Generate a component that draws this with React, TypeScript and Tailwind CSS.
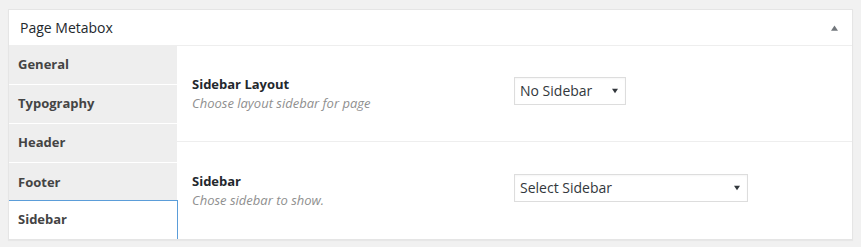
import React, { useState } from 'react';

const tabs = ['General', 'Typography', 'Header', 'Footer', 'Sidebar'];

const Caret: React.FC<{ up?: boolean; className?: string }> = ({ up, className }) => (
  <svg width="8" height="6" viewBox="0 0 8 6" className={className}>
    {up ? <path d="M4 0 L8 6 L0 6 Z" fill="currentColor" /> : <path d="M0 0 L8 0 L4 6 Z" fill="currentColor" />}
  </svg>
);

const FakeSelect: React.FC<{ value: string; width: string }> = ({ value, width }) => (
  <div
    className={`${width} h-[28px] border border-[#dddddd] bg-white flex items-center justify-between pl-[5px] pr-[7px] text-[14px] text-[#32373c] shadow-[inset_0_1px_2px_rgba(0,0,0,0.04)]`}
  >
    <span>{value}</span>
    <Caret className="text-[#32373c] w-[6px] h-[6px]" />
  </div>
);

const App: React.FC = () => {
  const [active, setActive] = useState('Sidebar');

  return (
    <div className="h-[247px] bg-[#f1f1f1] pt-[9px] px-[8px] font-['Open_Sans',sans-serif] text-[#23282d]">
      <div className="w-[845px] bg-white border border-[#e5e5e5] shadow-[0_1px_1px_rgba(0,0,0,0.04)]">
        {/* Header */}
        <div className="h-[36px] border-b border-[#eeeeee] flex items-center justify-between pl-[11px] pr-[14px]">
          <h2 className="text-[14px] leading-none">Page Metabox</h2>
          <Caret up className="text-[#72777c] w-[7px] h-[6px]" />
        </div>

        {/* Body */}
        <div className="flex h-[193px]">
          <ul className="w-[168px] bg-[#eeeeee] flex flex-col">
            {tabs.map((t, i) => {
              const isActive = t === active;
              const nextActive = tabs[i + 1] === active;
              return (
                <li
                  key={t}
                  onClick={() => setActive(t)}
                  className={
                    isActive
                      ? '-mt-[2px] flex-1 w-[169px] bg-white border-t border-r border-[#5b9dd9] flex items-center pl-[9px] text-[13px] font-bold text-[#444444] cursor-pointer relative z-10'
                      : `h-[39px] ${nextActive ? '' : 'border-b border-white'} flex items-center pl-[9px] text-[13px] font-bold text-[#444444] cursor-pointer`
                  }
                >
                  {t}
                </li>
              );
            })}
          </ul>

          <div className="flex-1 flex flex-col">
            <div className="h-[96px] border-b border-[#eeeeee] flex items-center pl-[15px]">
              <div className="w-[322px]">
                <div className="text-[13px] font-bold leading-[19px]">Sidebar Layout</div>
                <div className="text-[13px] italic text-[#8f8f8f] leading-[19px]">Choose layout sidebar for page</div>
              </div>
              <div className="mb-[6px]">
                <FakeSelect value="No Sidebar" width="w-[112px]" />
              </div>
            </div>
            <div className="flex-1 flex items-center pl-[15px]">
              <div className="w-[322px]">
                <div className="text-[13px] font-bold leading-[19px]">Sidebar</div>
                <div className="text-[13px] italic text-[#8f8f8f] leading-[19px]">Chose sidebar to show.</div>
              </div>
              <div className="mb-[6px]">
                <FakeSelect value="Select Sidebar" width="w-[234px]" />
              </div>
            </div>
          </div>
        </div>
      </div>
    </div>
  );
};

export default App;
